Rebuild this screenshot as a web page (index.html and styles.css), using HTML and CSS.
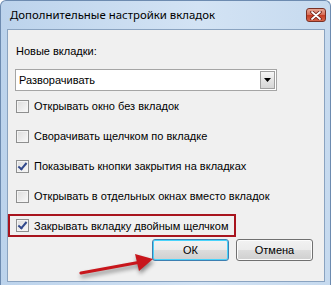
FILE: index.html
```html
<!DOCTYPE html>
<html lang="ru">
<head>
    <meta charset="UTF-8">
    <meta name="viewport" content="width=device-width, initial-scale=1.0">
    <title>Дополнительные настройки вкладок</title>
    <link rel="stylesheet" href="styles.css">
</head>
<body>
    <div class="window">
        <div class="titleBar">
            <span class="title">Дополнительные настройки вкладок</span>
            <span class="closeBtn">
                <svg width="12" height="9" viewBox="0 0 12 9">
                    <path d="M2 1 L10 8 M10 1 L2 8" stroke="#6b1a12" stroke-width="3.4" stroke-linecap="round"/>
                    <path d="M2 1 L10 8 M10 1 L2 8" stroke="#ffffff" stroke-width="1.8" stroke-linecap="round"/>
                </svg>
            </span>
        </div>

        <div class="content">
            <div class="fieldLabel">Новые вкладки:</div>
            <div class="selectBox">
                <span class="selectText">Разворачивать</span>
                <span class="selectBtn">
                    <svg width="7" height="4" viewBox="0 0 7 4"><path d="M0 0 H7 L3.5 4 Z" fill="#000"/></svg>
                </span>
            </div>

            <div class="cbRow"><span class="cb"></span>Открывать окно без вкладок</div>
            <div class="cbRow"><span class="cb"></span>Сворачивать щелчком по вкладке</div>
            <div class="cbRow"><span class="cb checked"></span>Показывать кнопки закрытия на вкладках</div>
            <div class="cbRow"><span class="cb"></span>Открывать в отдельных окнах вместо вкладок</div>
            <div class="cbRow marked"><span class="cb checked"></span>Закрывать вкладку двойным щелчком</div>

            <div class="buttonRow">
                <span class="btn default">ОК</span>
                <span class="btn">Отмена</span>
            </div>
        </div>

        <!-- red pointer arrow drawn over the dialog -->
        <svg class="pointer" width="90" height="30" viewBox="0 0 90 30">
            <path d="M2 24 L62 13" stroke="#c8161c" stroke-width="3.2" stroke-linecap="round"/>
            <path d="M56 5 L74 10 L60 22 Z" fill="#c8161c"/>
        </svg>
    </div>
</body>
</html>
```

FILE: styles.css
```css
/* page reset and base font */
body {
    margin: 0;
    background-color: #ffffff;
    font-family: "Liberation Sans", Arial, sans-serif;
    font-size: 11px;
    color: #000000;
}

/* outer window frame */
.window {
    position: relative;
    width: 331px;
    height: 285px;
    box-sizing: border-box;
    border: 1px solid #6d8bb0;
    border-bottom: 0;
    border-radius: 6px 6px 0 0;
    background: linear-gradient(to right, #bcd3ec, #d3e3f4 60%, #c6daef);
    display: flex;
    flex-direction: column;
}

/* title bar with the close button */
.titleBar {
    height: 28px;
    display: flex;
    align-items: center;
    justify-content: space-between;
    padding: 0 4px 0 9px;
}

.title {
    font-family: "Noto Sans", "Liberation Sans", sans-serif;
    font-size: 11.4px;
    padding-bottom: 1px;
}

.closeBtn {
    width: 20px;
    height: 14px;
    box-sizing: border-box;
    border: 1px solid #7a3024;
    border-radius: 3px;
    background: linear-gradient(#e6a796, #d56b55 50%, #c43a22 51%, #d7664c);
    display: flex;
    align-items: center;
    justify-content: center;
}

/* grey client area */
.content {
    flex: 1;
    margin: 0 5px 3px 6px;
    border: 1px solid #8aa3c0;
    background-color: #f0f0f0;
    padding: 14px 0 0 7px;
    white-space: nowrap;
}

.fieldLabel {
    line-height: 15px;
    padding-left: 1px;
}

/* drop down list */
.selectBox {
    margin-top: 10px;
    width: 262px;
    height: 22px;
    box-sizing: border-box;
    border: 1px solid #a5a5a5;
    background-color: #ffffff;
    display: flex;
    align-items: center;
    justify-content: space-between;
    padding: 0 1px 0 3px;
}

.selectBtn {
    width: 15px;
    height: 18px;
    box-sizing: border-box;
    border: 1px solid #a0a0a0;
    background: linear-gradient(#f7f7f7, #e4e4e4 50%, #d6d6d6);
    display: flex;
    align-items: center;
    justify-content: center;
}

/* checkbox rows */
.cbRow {
    height: 30px;
    display: flex;
    align-items: center;
    gap: 5px;
    padding-left: 1px;
}

.cbRow:first-of-type {
    margin-top: 4px;
}

.cb {
    width: 13px;
    height: 13px;
    box-sizing: border-box;
    border: 1px solid #8e8f8f;
    background: linear-gradient(135deg, #dcdcdc, #f9f9f9);
    box-shadow: inset 0 0 0 1px #f4f4f4;
    position: relative;
}

.cb.checked::after {
    content: "";
    position: absolute;
    left: 3px;
    top: 0px;
    width: 3px;
    height: 7px;
    border: solid #31498c;
    border-width: 0 2px 2px 0;
    transform: rotate(40deg);
}

/* red frame round the last option */
.cbRow.marked {
    height: 23px;
    margin-top: 3px;
    margin-left: -7px;
    width: 228px;
    box-sizing: border-box;
    border: 2px solid #a8141e;
    padding-left: 6px;
}

/* OK / Cancel */
.buttonRow {
    display: flex;
    gap: 7px;
    margin: 2px 0 0 137px;
}

.btn {
    width: 77px;
    height: 22px;
    box-sizing: border-box;
    border: 1px solid #707070;
    border-radius: 3px;
    background: linear-gradient(#f2f2f2, #ebebeb 50%, #dddddd 51%, #cfcfcf);
    box-shadow: inset 0 0 0 1px #fcfcfc;
    display: flex;
    align-items: center;
    justify-content: center;
}

.btn.default {
    border-color: #3c7fb1;
    box-shadow: inset 0 0 0 1px #48d3fb;
}

.pointer {
    position: absolute;
    left: 78px;
    top: 248px;
    filter: drop-shadow(1px 3px 2px rgba(0, 0, 0, 0.45));
}
```
